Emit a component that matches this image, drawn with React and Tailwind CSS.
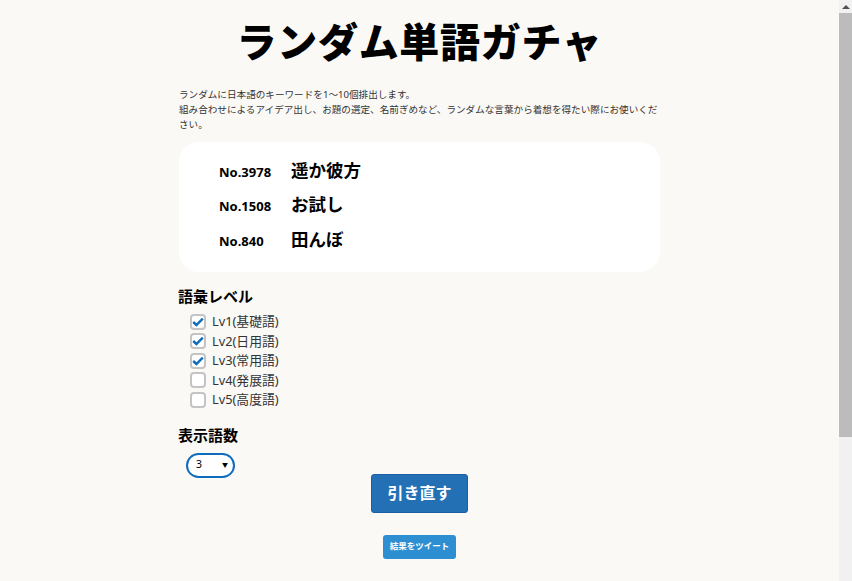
const words = [
  { no: "No.3978", word: "遥か彼方" },
  { no: "No.1508", word: "お試し" },
  { no: "No.840", word: "田んぼ" },
];

const levels = [
  { label: "Lv1(基礎語)", checked: true },
  { label: "Lv2(日用語)", checked: true },
  { label: "Lv3(常用語)", checked: true },
  { label: "Lv4(発展語)", checked: false },
  { label: "Lv5(高度語)", checked: false },
];

const Check = ({ checked }) => (
  <span className="flex h-[16px] w-[16px] items-center justify-center rounded-[4px] border-2 border-[#c4c4c4] bg-white">
    {checked && (
      <svg width="12" height="10" viewBox="0 0 12 10" fill="none">
        <path d="M1.2 5 L4.4 8 L10.8 1.6" stroke="#0f6cbd" strokeWidth="2.4" />
      </svg>
    )}
  </span>
);

const App = () => {
  return (
    <div className="flex h-[581px] w-[852px] overflow-hidden bg-[#faf9f6] font-['Noto_Sans','Noto_Sans_CJK_JP',sans-serif] text-black">
      <main className="flex-1">
        <div className="mx-auto w-[481px]">
          <h1 className="pt-[13px] text-center font-['Noto_Sans_CJK_JP',sans-serif] text-[40px] leading-[54px] font-black tracking-[0.7px] whitespace-nowrap">
            ランダム単語ガチャ
          </h1>
          <p className="mt-[20px] text-[9.6px] leading-[15px] text-[#333]">
            ランダムに日本語のキーワードを1～10個排出します。
            <br />
            組み合わせによるアイデア出し、お題の選定、名前ぎめなど、ランダムな言葉から着想を得たい際にお使いください。
          </p>
          <div className="mt-[10px] h-[130px] rounded-[20px] bg-white pt-[12px] pl-[40px]">
            {words.map((w) => (
              <div key={w.no} className="flex h-[34.5px] items-center">
                <span className="w-[72px] pt-[2px] text-[13px] font-bold">{w.no}</span>
                <span className="pb-[3px] text-[17.5px] font-bold">{w.word}</span>
              </div>
            ))}
          </div>
          <h2 className="mt-[14px] -ml-px text-[15px] leading-[20px] font-bold">語彙レベル</h2>
          <div className="mt-[6px] pl-[11px]">
            {levels.map((l) => (
              <label key={l.label} className="flex h-[19.5px] items-center gap-[6px] text-[12.8px] text-[#333]">
                <Check checked={l.checked} />
                {l.label}
              </label>
            ))}
          </div>
          <h2 className="mt-[15px] -ml-px text-[15px] leading-[20px] font-bold">表示語数</h2>
          <div className="mt-[8px] ml-[7px] flex h-[25px] w-[49px] items-center justify-between rounded-full border-2 border-[#0f6cbd] bg-white pr-[5px] pl-[8px] text-[10.5px]">
            <span>3</span>
            <span className="text-[6px]">▼</span>
          </div>
          <div className="flex flex-col items-center">
            <button className="-mt-[4px] h-[39px] w-[97px] rounded-[3px] border border-[#1a5fa3] bg-[#2470b5] text-[16px] font-bold text-white">
              引き直す
            </button>
            <button className="mt-[22px] h-[24px] w-[73px] rounded-[3px] bg-[#2d8fd2] text-[8.5px] font-bold text-white">
              結果をツイート
            </button>
          </div>
        </div>
      </main>
      <div className="flex w-[13px] flex-col bg-[#f1f1f1]">
        <div className="flex h-[13px] items-center justify-center">
          <span className="h-0 w-0 border-x-[4px] border-b-[4px] border-x-transparent border-b-[#505050]" />
        </div>
        <div className="h-[424px] bg-[#bcbcbc]" />
      </div>
    </div>
  );
};

export default App;
